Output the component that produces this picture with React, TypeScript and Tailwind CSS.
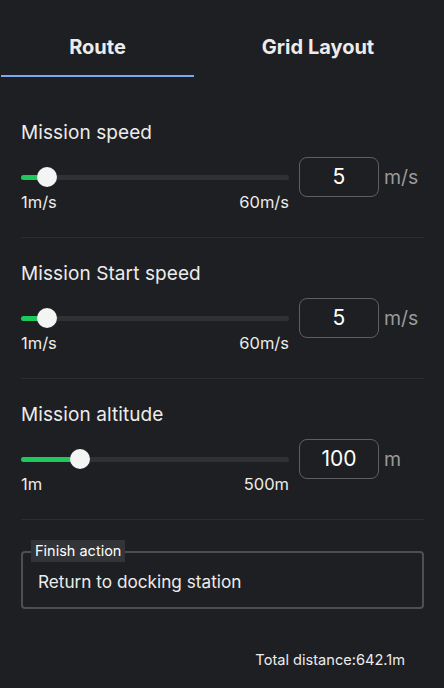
import React from "react";

type SliderProps = {
  label: string;
  thumb: number; // thumb centre offset from track start, px
  min: string;
  max: string;
  value: string;
  unit: string;
};

function SliderSection({ label, thumb, min, max, value, unit }: SliderProps) {
  return (
    <div className="border-b border-[#2c2d30] pt-6 pb-[25px]">
      <div className="text-[19px] leading-6 tracking-[0.005em] text-[#ececec]">{label}</div>
      <div className="mt-3 flex items-start">
        <div className="w-[268px]">
          <div className="relative mt-[10px] h-5">
            <div className="absolute left-0 right-0 top-[8px] h-[5px] rounded-full bg-[#303134]" />
            <div
              className="absolute left-0 top-[8px] h-[5px] rounded-full bg-[#1ec85a]"
              style={{ width: thumb }}
            />
            <div
              className="absolute top-0 h-5 w-5 rounded-full bg-[#f4f4f5]"
              style={{ left: thumb - 10 }}
            />
          </div>
          <div className="mt-[5px] flex justify-between text-[16.5px] leading-5 text-[#ececec]">
            <span>{min}</span>
            <span>{max}</span>
          </div>
        </div>
        <div className="ml-[10px] flex h-10 w-20 items-center justify-center rounded-lg border border-[#5e5f62] text-[21px] text-white">
          {value}
        </div>
        <div className="ml-[5px] mt-[8px] text-[19.5px] leading-6 text-[#9a9a9c]">{unit}</div>
      </div>
    </div>
  );
}

export default function App() {
  return (
    <div className="h-[688px] w-[444px] overflow-hidden bg-[#1e1f22] font-['Inter',sans-serif] text-[#ececec]">
      {/* Tabs */}
      <div className="flex h-[77px]">
        <div className="ml-px w-[193px] border-b-2 border-[#7aa7f0] pt-[35px] text-center text-[20px] font-bold leading-6">
          Route
        </div>
        <div className="w-[248px] pt-[35px] text-center text-[20px] font-bold leading-6">Grid Layout</div>
      </div>

      <div className="mt-5 pl-[21px] pr-[20px]">
        <SliderSection label="Mission speed" thumb={26} min="1m/s" max="60m/s" value="5" unit="m/s" />
        <SliderSection label="Mission Start speed" thumb={26} min="1m/s" max="60m/s" value="5" unit="m/s" />
        <SliderSection label="Mission altitude" thumb={59} min="1m" max="500m" value="100" unit="m" />

        {/* Finish action */}
        <div className="relative mt-[31px] h-[58px] rounded-[4px] border-2 border-[#4e4f52]">
          <span className="absolute left-[8px] top-[-13px] bg-[#333437] px-1 text-[14.5px] leading-[22px] text-white">
            Finish action
          </span>
          <div className="pl-[15px] pt-[17px] text-[17.2px] leading-6 text-[#ececec]">Return to docking station</div>
        </div>

        <div className="mt-[41px] pr-[19px] text-right text-[14.6px] leading-5 text-[#ececec]">Total distance:642.1m</div>
      </div>
    </div>
  );
}
